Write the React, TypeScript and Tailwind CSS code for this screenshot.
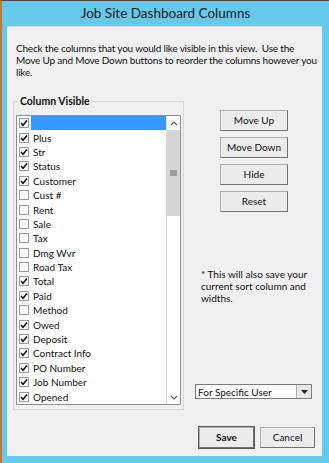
import React from 'react';

const rows: [string, boolean][] = [
  ['', true],
  ['Plus', true],
  ['Str', true],
  ['Status', true],
  ['Customer', true],
  ['Cust #', false],
  ['Rent', false],
  ['Sale', false],
  ['Tax', false],
  ['Dmg Wvr', false],
  ['Road Tax', false],
  ['Total', true],
  ['Paid', true],
  ['Method', false],
  ['Owed', true],
  ['Deposit', true],
  ['Contract Info', true],
  ['PO Number', true],
  ['Job Number', true],
  ['Opened', true],
];

function Check({ on }: { on: boolean }) {
  return (
    <span className="flex h-[10px] w-[10px] shrink-0 items-center justify-center border border-[#9a9a9a] bg-white">
      {on && (
        <svg width="8" height="8" viewBox="0 0 8 8">
          <path d="M1 4 L3 6.2 L7 1.5" fill="none" stroke="#111" strokeWidth="1.6" />
        </svg>
      )}
    </span>
  );
}

function WinButton({ label, bold, w }: { label: string; bold?: boolean; w: string }) {
  return (
    <button
      className={
        'flex h-[21px] items-center justify-center border border-[#adadad] border-r-[#6f6f6f] border-b-[#6f6f6f] bg-[#ececec] text-[10px] text-[#111] ' +
        w +
        (bold ? ' font-bold outline outline-1 outline-[#5a5a5a]' : '')
      }
    >
      {label}
    </button>
  );
}

export default function App() {
  return (
    <div
      className="flex h-[463px] w-[329px] flex-col border-l-2 border-t border-l-[#c47a2c] border-t-[#4a4a4a] bg-[#66c9ea]"
      style={{ fontFamily: 'Lato, "Noto Sans", sans-serif' }}
    >
      <div className="flex h-[25px] items-center justify-center text-[13.5px] text-[#1a1a1a]">Job Site Dashboard Columns</div>
      <div className="ml-[5px] flex h-[430px] w-[315px] flex-col border-t border-[#d8d8d8] bg-[#f0f0f0] pl-[6px] pr-[6px] text-[10px] text-[#111]">
        <p className="ml-[3px] mt-[15px] whitespace-nowrap leading-[12px] tracking-[-0.2px]">
          Check the columns that you would like visible in this view.&nbsp; Use the
          <br />
          Move Up and Move Down buttons to reorder the columns however you
          <br />
          like.
        </p>
        <div className="mt-[23px] flex">
          <div className="relative h-[309px] w-[171px] border border-[#d5d5d5] px-[2px] pb-[3px] pt-[13px]">
            <span className="absolute left-[4px] top-[-8px] bg-[#f0f0f0] px-[2px] text-[10.5px] font-bold leading-[14px]">Column Visible</span>
            <div className="flex h-[290px] border border-[#8c8f94] bg-white">
              <div className="flex-1">
                {rows.map(([name, on], i) => (
                  <div key={i} className="flex h-[14.4px] items-center">
                    <span className="ml-[2px] mr-[2px] flex">
                      <Check on={on} />
                    </span>
                    <span className={'flex h-full flex-1 items-center pl-[2px] leading-none ' + (i === 0 ? 'bg-[#3399ff]' : '')}>{name}</span>
                  </div>
                ))}
              </div>
              <div className="flex w-[14px] flex-col border-l border-[#d9d9d9] bg-white">
                <div className="flex h-[14px] items-center justify-center">
                  <svg width="8" height="5" viewBox="0 0 8 5">
                    <path d="M1 4 L4 1 L7 4" fill="none" stroke="#606060" strokeWidth="1.2" />
                  </svg>
                </div>
                <div className="flex h-[86px] items-center justify-center bg-[#d6d6d6]">
                  <svg width="7" height="6" viewBox="0 0 7 6">
                    <path d="M0 1h7M0 3h7M0 5h7" stroke="#606060" strokeWidth="1" />
                  </svg>
                </div>
                <div className="flex-1" />
                <div className="flex h-[14px] items-center justify-center">
                  <svg width="8" height="5" viewBox="0 0 8 5">
                    <path d="M1 1 L4 4 L7 1" fill="none" stroke="#606060" strokeWidth="1.2" />
                  </svg>
                </div>
              </div>
            </div>
          </div>
          <div className="ml-[11px] flex w-[117px] flex-col">
            <div className="ml-[25px] mt-[9px] flex w-[68px] flex-col gap-[6px]">
              <WinButton label="Move Up" w="w-[68px]" />
              <WinButton label="Move Down" w="w-[68px]" />
              <WinButton label="Hide" w="w-[68px]" />
              <WinButton label="Reset" w="w-[68px]" />
            </div>
            <p className="ml-[6px] mt-[56px] whitespace-nowrap leading-[12px]">
              * This will also save your
              <br />
              current sort column and
              <br />
              widths.
            </p>
            <div className="mt-[auto] mb-[11px] flex h-[15px] items-center border border-[#7a7a7a] bg-white">
              <span className="flex-1 pl-[2px] leading-none">For Specific User</span>
              <span className="flex h-full w-[15px] items-center justify-center border-l border-[#adadad] bg-[#e8e8e8]">
                <svg width="7" height="4" viewBox="0 0 7 4">
                  <path d="M0 0h7L3.5 4z" fill="#222" />
                </svg>
              </span>
            </div>
          </div>
        </div>
        <div className="mt-[17px] flex justify-end gap-[6px] pr-[1px]">
          <WinButton label="Save" bold w="w-[55px]" />
          <WinButton label="Cancel" w="w-[55px]" />
        </div>
      </div>
    </div>
  );
}
